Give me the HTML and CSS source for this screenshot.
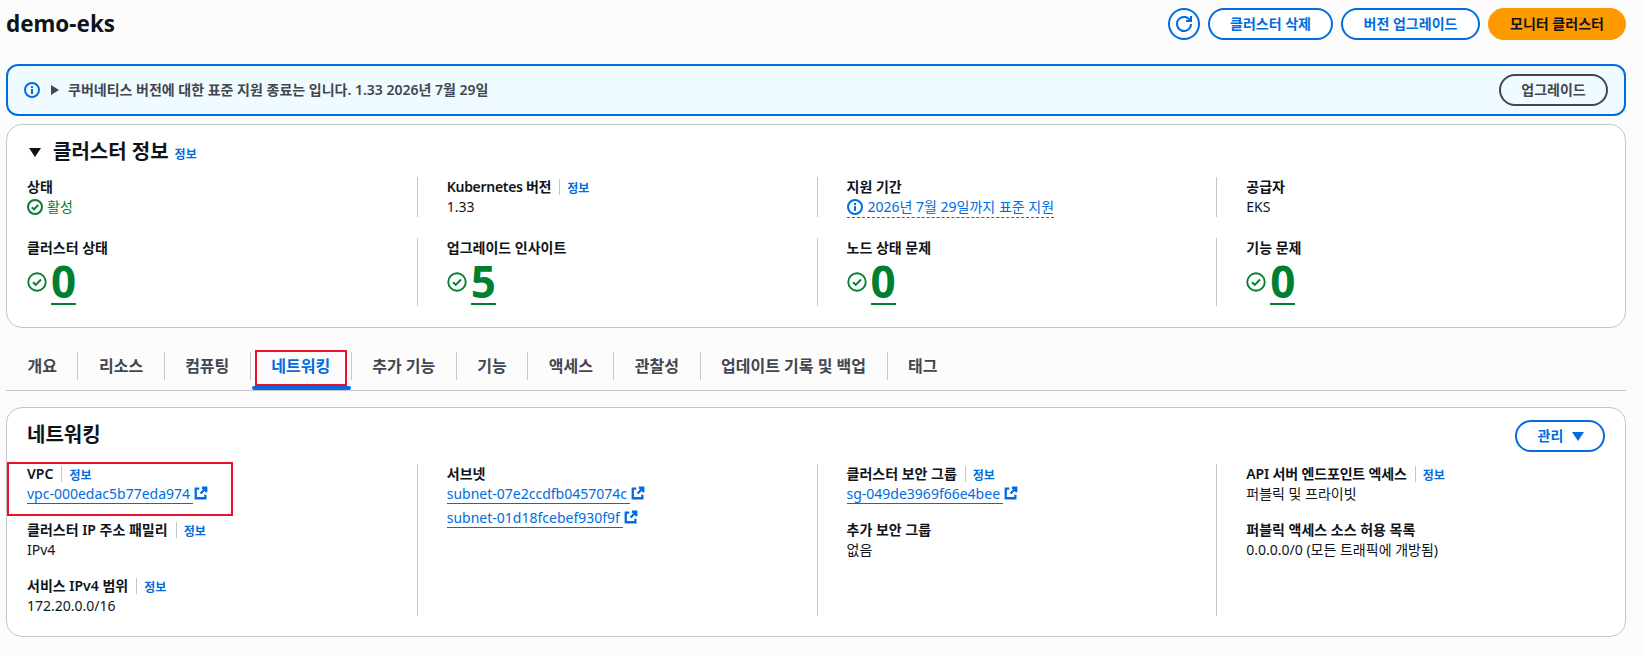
FILE: index.html
```html
<!DOCTYPE html>
<html lang="ko">
<head>
<meta charset="utf-8">
<title>demo-eks</title>
<link rel="stylesheet" href="styles.css">
</head>
<body>
<svg class="sprite" aria-hidden="true">
  <symbol id="i-info" viewBox="0 0 16 16"><circle cx="8" cy="8" r="7" fill="none" stroke="currentColor" stroke-width="2"/><path d="M8 12V7M8 6V4" fill="none" stroke="currentColor" stroke-width="2"/></symbol>
  <symbol id="i-check" viewBox="0 0 16 16"><circle cx="8" cy="8" r="7" fill="none" stroke="currentColor" stroke-width="2"/><path d="M4.8 8.2l2.2 2.2 4.2-4.4" fill="none" stroke="currentColor" stroke-width="2"/></symbol>
  <symbol id="i-check-lg" viewBox="0 0 16 16"><circle cx="8" cy="8" r="7" fill="none" stroke="currentColor" stroke-width="1.5"/><path d="M4.8 8.2l2.2 2.2 4.2-4.4" fill="none" stroke="currentColor" stroke-width="1.5"/></symbol>
  <symbol id="i-ext" viewBox="0 0 16 16"><path d="M9 2h5v5M14 2L7.5 8.5M6 3H2v11h11v-4" fill="none" stroke="currentColor" stroke-width="2.6"/></symbol>
  <symbol id="i-refresh" viewBox="0 0 16 16"><path d="M10 5h5V0M15 8a7 7 0 1 1-.67-3.01" fill="none" stroke="currentColor" stroke-width="2"/></symbol>
</svg>
<main class="page">
  <header class="head">
    <h1 class="page-title">demo-eks</h1>
    <div class="actions">
      <button class="btn btn-icon"><svg class="ic16"><use href="#i-refresh"/></svg></button>
      <button class="btn btn-delete">클러스터 삭제</button>
      <button class="btn btn-upgrade">버전 업그레이드</button>
      <button class="btn btn-primary">모니터 클러스터</button>
    </div>
  </header>

  <section class="alert">
    <svg class="ic16 blue"><use href="#i-info"/></svg>
    <span class="tri-right"></span>
    <span class="alert-text">쿠버네티스 버전에 대한 표준 지원 종료는 입니다. 1.33 2026년 7월 29일</span>
    <button class="btn btn-normal">업그레이드</button>
  </section>

  <section class="card card-info">
    <div class="card-head">
      <span class="tri-down"></span>
      <h2 class="card-title">클러스터 정보</h2>
      <a class="info">정보</a>
    </div>
    <div class="grid">
      <div class="cell first">
        <div class="label">상태</div>
        <div class="value green"><svg class="ic16"><use href="#i-check"/></svg>활성</div>
      </div>
      <div class="cell">
        <div class="label"><span class="tight">Kubernetes 버전</span><i class="sep"></i><a class="info">정보</a></div>
        <div class="value">1.33</div>
      </div>
      <div class="cell">
        <div class="label">지원 기간</div>
        <div class="value"><a class="dash"><svg class="ic16"><use href="#i-info"/></svg>2026년 7월 29일까지 표준 지원</a></div>
      </div>
      <div class="cell">
        <div class="label">공급자</div>
        <div class="value">EKS</div>
      </div>
      <div class="cell first">
        <div class="label">클러스터 상태</div>
        <div class="metric"><svg class="ic20"><use href="#i-check-lg"/></svg><span class="num">0</span></div>
      </div>
      <div class="cell">
        <div class="label">업그레이드 인사이트</div>
        <div class="metric"><svg class="ic20"><use href="#i-check-lg"/></svg><span class="num">5</span></div>
      </div>
      <div class="cell">
        <div class="label">노드 상태 문제</div>
        <div class="metric"><svg class="ic20"><use href="#i-check-lg"/></svg><span class="num">0</span></div>
      </div>
      <div class="cell">
        <div class="label">기능 문제</div>
        <div class="metric"><svg class="ic20"><use href="#i-check-lg"/></svg><span class="num">0</span></div>
      </div>
    </div>
  </section>

  <nav class="tabs">
    <a class="tab">개요</a>
    <a class="tab">리소스</a>
    <a class="tab">컴퓨팅</a>
    <a class="tab active">네트워킹</a>
    <a class="tab">추가 기능</a>
    <a class="tab">기능</a>
    <a class="tab">액세스</a>
    <a class="tab">관찰성</a>
    <a class="tab">업데이트 기록 및 백업</a>
    <a class="tab last">태그</a>
  </nav>

  <section class="card card-net">
    <div class="net-head">
      <h2 class="net-title">네트워킹</h2>
      <button class="btn btn-manage">관리<span class="tri-down small"></span></button>
    </div>
    <div class="grid">
      <div class="cell first stack">
        <div class="kv marked">
          <div class="label">VPC<i class="sep"></i><a class="info">정보</a></div>
          <div class="value"><a class="link">vpc-000edac5b77eda974</a><svg class="ext"><use href="#i-ext"/></svg></div>
        </div>
        <div class="kv">
          <div class="label">클러스터 IP 주소 패밀리<i class="sep"></i><a class="info">정보</a></div>
          <div class="value">IPv4</div>
        </div>
        <div class="kv">
          <div class="label">서비스 IPv4 범위<i class="sep"></i><a class="info">정보</a></div>
          <div class="value">172.20.0.0/16</div>
        </div>
      </div>
      <div class="cell">
        <div class="label">서브넷</div>
        <div class="value"><a class="link">subnet-07e2ccdfb0457074c</a><svg class="ext"><use href="#i-ext"/></svg></div>
        <div class="value second"><a class="link">subnet-01d18fcebef930f9f</a><svg class="ext"><use href="#i-ext"/></svg></div>
      </div>
      <div class="cell stack">
        <div class="kv">
          <div class="label">클러스터 보안 그룹<i class="sep"></i><a class="info">정보</a></div>
          <div class="value"><a class="link">sg-049de3969f66e4bee</a><svg class="ext"><use href="#i-ext"/></svg></div>
        </div>
        <div class="kv">
          <div class="label">추가 보안 그룹</div>
          <div class="value">없음</div>
        </div>
      </div>
      <div class="cell stack">
        <div class="kv">
          <div class="label"><span class="tight-sm">API 서버 엔드포인트 엑세스</span><i class="sep"></i><a class="info">정보</a></div>
          <div class="value">퍼블릭 및 프라이빗</div>
        </div>
        <div class="kv">
          <div class="label">퍼블릭 액세스 소스 허용 목록</div>
          <div class="value">0.0.0.0/0 (모든 트래픽에 개방됨)</div>
        </div>
      </div>
    </div>
  </section>
</main>
</body>
</html>
```
FILE: styles.css
```css
* { box-sizing: border-box; }
html, body { margin: 0; padding: 0; }
body {
  background: #fcfcfc;
  color: #0f141a;
  font-family: "Noto Sans", "Noto Sans CJK KR", sans-serif;
  font-size: 14px;
  line-height: 20px;
}
.sprite { display: none; }
.page { padding: 8px 18px 21px 6px; }
h1, h2 { margin: 0; }
a { color: #006ce0; }

.ic16 { width: 16px; height: 16px; flex: none; display: block; }
.ic20 { width: 20px; height: 20px; flex: none; display: block; color: #00802f; }
.ext { width: 14px; height: 14px; margin-left: 1px; color: #006ce0; position: relative; top: -1px; }
.blue { color: #006ce0; }

.head { display: flex; justify-content: space-between; align-items: center; height: 32px; margin-bottom: 24px; }
.page-title { font-size: 22.4px; line-height: 32px; font-weight: 700; }
.actions { display: flex; gap: 8px; }

.btn {
  display: inline-flex; align-items: center; justify-content: center;
  height: 32px; padding: 0;
  border: 2px solid #006ce0; border-radius: 20px;
  background: #fff; color: #006ce0;
  font: 700 14px/20px "Noto Sans", "Noto Sans CJK KR", sans-serif;
}
.btn-icon { width: 32px; }
.btn-delete { width: 125px; }
.btn-upgrade { width: 139px; }
.btn-primary { width: 138px; background: #ff9900; border-color: #ff9900; color: #0f141a; }
.btn-normal { width: 109px; border-color: #424650; color: #424650; background: transparent; margin-left: auto; }
.btn-manage { width: 90px; gap: 9px; padding-left: 2px; background: transparent; }

.alert {
  display: flex; align-items: center;
  height: 52px;
  padding: 0 16px 0 16px;
  border: 2px solid #006ce0; border-radius: 12px;
  background: #f0fbff;
  margin-bottom: 8px;
}
.tri-right { width: 0; height: 0; margin-left: 11px; border-left: 8px solid #424650; border-top: 5px solid transparent; border-bottom: 5px solid transparent; }
.alert-text { margin-left: 9px; color: #424650; font-weight: 600; }

.card { background: #fff; border: 1px solid #c6c6cd; border-radius: 16px; }
.card-info { height: 204px; }
.card-net { height: 230px; }

.card-head { display: flex; align-items: center; height: 52px; padding: 2px 0 0 22px; }
.card-head .info { margin-top: 6px; }
.tri-down { width: 0; height: 0; border-top: 9px solid #0f141a; border-left: 6px solid transparent; border-right: 6px solid transparent; }
.tri-down.small { border-top-color: #006ce0; }
.card-title { margin-left: 12px; margin-right: 6px; font-size: 20px; line-height: 28px; font-weight: 700; }

.grid { display: grid; grid-template-columns: repeat(4, 1fr); row-gap: 21px; padding: 0 9px 0 10px; }
.cell { border-left: 1px solid #c6c6cd; padding-left: 29px; }
.cell.first { border-left: 0; padding-left: 10px; }
.label { display: flex; align-items: center; font-weight: 600; height: 20px; }
.tight { letter-spacing: -0.3px; }
.tight-sm { letter-spacing: -0.15px; }
.value { display: flex; align-items: center; height: 20px; }
.value.second { margin-top: 4px; }
.green { color: #00802f; gap: 4px; }

.info { font-size: 12px; line-height: 16px; font-weight: 700; }
.label .info { margin-top: 4px; }
.sep { display: block; width: 1px; height: 16px; margin: 0 7px 0 8px; background: #c6c6cd; }

.dash { display: flex; align-items: center; gap: 5px; height: 21px; border-bottom: 1px dashed #006ce0; }
.link { display: block; height: 20px; padding-right: 3px; border-bottom: 1px solid #006ce0; }

.metric { display: flex; align-items: center; gap: 4px; height: 48px; color: #00802f; }
.num { display: block; height: 46px; font-size: 44px; line-height: 44px; font-weight: 700; border-bottom: 2px solid #00802f; }

.tabs { display: flex; height: 41px; margin-top: 22px; padding-left: 1px; padding-top: 2px; border-bottom: 1px solid #c6c6cd; }
.tab {
  position: relative;
  height: 28px; padding: 0 20.5px;
  border-right: 1px solid #c6c6cd;
  color: #424650;
  font-size: 16px; line-height: 28px; font-weight: 700;
}
.tab.last { border-right: 0; }
.tab.active { color: #006ce0; }
.tab.active::before {
  content: ""; position: absolute; left: 4px; right: 4px; top: -2px; height: 32px;
  border: 2px solid #e8112d;
}
.tab.active::after {
  content: ""; position: absolute; left: 1px; right: 0; top: 34px; height: 4px;
  background: #006ce0; border-radius: 2px;
}

.card-net { margin-top: 16px; }
.net-head { display: flex; justify-content: space-between; align-items: center; height: 32px; margin: 12px 0; padding: 0 20px; }
.net-title { font-size: 20px; line-height: 28px; font-weight: 700; margin-top: -2px; }

.stack { display: flex; flex-direction: column; gap: 16px; }
.cell.first.stack, .card-net .cell { height: 152px; }
.kv { position: relative; }
.kv.marked::before {
  content: ""; position: absolute; left: -20px; top: -2px; width: 222px; height: 50px;
  border: 2px solid #e8112d;
}
```
